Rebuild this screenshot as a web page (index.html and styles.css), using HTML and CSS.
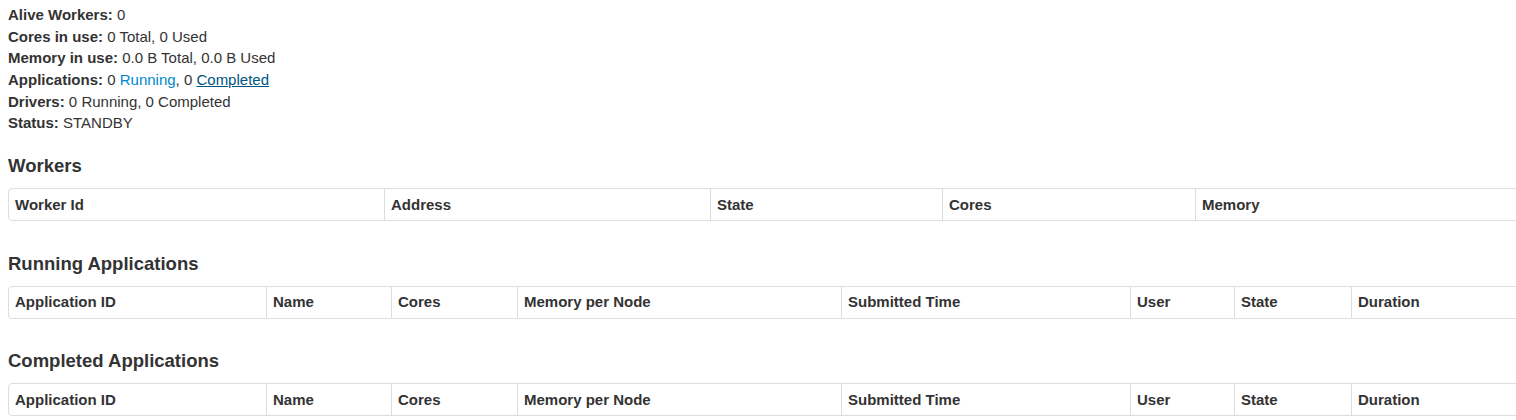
FILE: index.html
```html
<!DOCTYPE html>
<html>
<head>
<meta charset="utf-8">
<link rel="stylesheet" href="styles.css">
</head>
<body>
<div class="page">
  <ul class="summary">
    <li><strong>Alive Workers:</strong> 0</li>
    <li><strong>Cores in use:</strong> 0 Total, 0 Used</li>
    <li><strong>Memory in use:</strong> 0.0 B Total, 0.0 B Used</li>
    <li><strong>Applications:</strong> 0 <a class="link" href="#running-app">Running</a>, 0 <a class="link link-hover" href="#completed-app">Completed</a></li>
    <li><strong>Drivers:</strong> 0 Running, 0 Completed</li>
    <li><strong>Status:</strong> STANDBY</li>
  </ul>

  <h4 class="heading heading-first">Workers</h4>
  <table class="grid">
    <colgroup>
      <col style="width:375px"><col style="width:326px"><col style="width:232px"><col style="width:253px"><col>
    </colgroup>
    <thead>
      <tr><th>Worker Id</th><th>Address</th><th>State</th><th>Cores</th><th>Memory</th></tr>
    </thead>
  </table>

  <h4 class="heading heading-mid" id="running-app">Running Applications</h4>
  <table class="grid">
    <colgroup>
      <col style="width:257px"><col style="width:125px"><col style="width:126px"><col style="width:324px"><col style="width:289px"><col style="width:104px"><col style="width:117px"><col>
    </colgroup>
    <thead>
      <tr><th>Application ID</th><th>Name</th><th>Cores</th><th>Memory per Node</th><th>Submitted Time</th><th>User</th><th>State</th><th>Duration</th></tr>
    </thead>
  </table>

  <h4 class="heading heading-last" id="completed-app">Completed Applications</h4>
  <table class="grid">
    <colgroup>
      <col style="width:257px"><col style="width:125px"><col style="width:126px"><col style="width:324px"><col style="width:289px"><col style="width:104px"><col style="width:117px"><col>
    </colgroup>
    <thead>
      <tr><th>Application ID</th><th>Name</th><th>Cores</th><th>Memory per Node</th><th>Submitted Time</th><th>User</th><th>State</th><th>Duration</th></tr>
    </thead>
  </table>
</div>
</body>
</html>
```

FILE: styles.css
```css
html, body {
  margin: 0;
  padding: 0;
  overflow: hidden;
  background: #fff;
}

body {
  font-family: "Liberation Sans", Arial, Helvetica, sans-serif;
  font-size: 15px;
  line-height: 21.6px;
  color: #333;
}

.page {
  padding: 0 0 0 8px;
  width: 1560px;
}

.summary {
  list-style: none;
  margin: 4.2px 0 0 0;
  padding: 0;
}

.summary li {
  margin: 0;
  padding: 0;
}

.summary strong {
  font-weight: bold;
}

.link {
  color: #0088cc;
  text-decoration: none;
}

.link-hover {
  color: #005580;
  text-decoration: underline;
}

.heading {
  font-size: 18.5px;
  font-weight: bold;
  line-height: 21.6px;
  margin: 0 0 11.2px 0;
  color: #333;
}

.heading-first {
  margin-top: 21.4px;
}

.heading-mid {
  margin-top: 32.1px;
}

.heading-last {
  margin-top: 31.4px;
  margin-bottom: 11.2px;
}

.grid {
  width: 1540px;
  table-layout: fixed;
  border-collapse: separate;
  border-spacing: 0;
  border: 1px solid #ddd;
  border-radius: 4px;
  margin: 0;
}

.grid th {
  text-align: left;
  font-weight: bold;
  font-size: 15px;
  line-height: 21.6px;
  padding: 4.7px 6px;
  border-left: 1px solid #ddd;
  color: #333;
  white-space: nowrap;
  overflow: hidden;
}

.grid th:first-child {
  border-left: 0;
}
```
